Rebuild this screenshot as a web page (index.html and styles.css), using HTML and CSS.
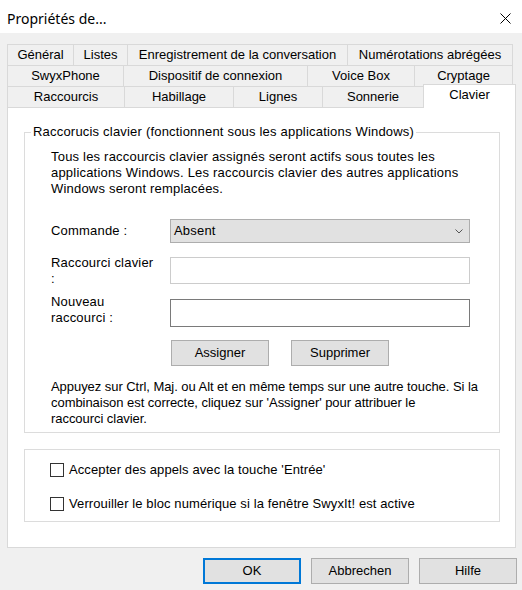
FILE: index.html
```html
<!DOCTYPE html>
<html lang="fr">
<head>
<meta charset="utf-8">
<title>Propriétés de...</title>
<link rel="stylesheet" href="styles.css">
</head>
<body>
<div class="titlebar">
  <span class="title">Propriétés de...</span>
  <svg class="close" width="11" height="11" viewBox="0 0 11 11" aria-label="Fermer"><path d="M0.5 0.5 L10.5 10.5 M10.5 0.5 L0.5 10.5" stroke="#000" stroke-width="1" fill="none"/></svg>
</div>
<div class="main">
  <div class="tabs" role="tablist">
    <div class="tabrow row1">
      <div class="tab" role="tab">Général</div>
      <div class="tab" role="tab">Listes</div>
      <div class="tab" role="tab">Enregistrement de la conversation</div>
      <div class="tab last" role="tab">Numérotations abrégées</div>
    </div>
    <div class="tabrow row2">
      <div class="tab" role="tab">SwyxPhone</div>
      <div class="tab" role="tab">Dispositif de connexion</div>
      <div class="tab" role="tab">Voice Box</div>
      <div class="tab last" role="tab">Cryptage</div>
    </div>
    <div class="tabrow row3">
      <div class="tab" role="tab">Raccourcis</div>
      <div class="tab" role="tab">Habillage</div>
      <div class="tab" role="tab">Lignes</div>
      <div class="tab" role="tab">Sonnerie</div>
      <div class="tab sel" role="tab" aria-selected="true">Clavier</div>
    </div>
  </div>
  <div class="panel" role="tabpanel">
    <fieldset class="group">
      <legend>Raccorucis clavier (fonctionnent sous les applications Windows)</legend>
      <div class="gb-body">
        <p class="text">Tous les raccourcis clavier assignés seront actifs sous toutes les<br>applications Windows. Les raccourcis clavier des autres applications<br>Windows seront remplacées.</p>
        <div class="row row-cmd">
          <label class="lbl">Commande :</label>
          <div class="select"><span>Absent</span><svg width="8" height="5" viewBox="0 0 8 5"><path d="M0.5 0.5 L4 4 L7.5 0.5" stroke="#555" stroke-width="1" fill="none"/></svg></div>
        </div>
        <div class="row row-rc">
          <label class="lbl">Raccourci clavier<br>:</label>
          <input class="field field-rc" type="text">
        </div>
        <div class="row row-nr">
          <label class="lbl">Nouveau<br>raccourci :</label>
          <input class="field field-nr" type="text">
        </div>
        <div class="btnrow">
          <button class="btn">Assigner</button>
          <button class="btn">Supprimer</button>
        </div>
        <p class="text text2">Appuyez sur Ctrl, Maj. ou Alt et en même temps sur une autre touche. Si la<br>combinaison est correcte, cliquez sur 'Assigner' pour attribuer le<br>raccourci clavier.</p>
      </div>
    </fieldset>
    <div class="group2">
      <div class="check"><span class="box"></span><span>Accepter des appels avec la touche 'Entrée'</span></div>
      <div class="check"><span class="box"></span><span>Verrouiller le bloc numérique si la fenêtre SwyxIt! est active</span></div>
    </div>
  </div>
  <div class="footer">
    <button class="btn default">OK</button>
    <button class="btn">Abbrechen</button>
    <button class="btn">Hilfe</button>
  </div>
</div>
</body>
</html>
```
FILE: styles.css
```css
* { box-sizing: border-box; }
html, body { margin: 0; padding: 0; }
body {
  width: 522px;
  height: 590px;
  overflow: hidden;
  background: #f0f0f0;
  font-family: "Liberation Sans", Arial, sans-serif;
  font-size: 13px;
  line-height: 16px;
  color: #000;
}
.titlebar {
  height: 33px;
  background: #fff;
  display: flex;
  align-items: flex-start;
  justify-content: space-between;
  padding: 0 11px 0 7px;
}
.title {
  font-family: "Noto Sans", sans-serif;
  font-size: 14px;
  line-height: 20px;
  margin-top: 9px;
}
.close { display: block; margin-top: 13px; }
.main { padding: 11px 0 0 7px; }
.tabs { width: 509px; }
.tabrow { display: grid; grid-template-rows: 21px; }
.row1 { grid-template-columns: 66px 54px 220px 166px; }
.row2 { grid-template-columns: 116px 184px 107px 99px; }
.row3 { grid-template-columns: 117px 109px 89px 101px 93px; }
.tab {
  border-top: 1px solid #d9d9d9;
  border-left: 1px solid #d9d9d9;
  background: #f0f0f0;
  text-align: center;
  padding-top: 2px;
  white-space: nowrap;
}
.tab.last { border-right: 1px solid #d9d9d9; }
.tab.sel {
  position: relative;
  z-index: 1;
  background: #fff;
  border-right: 1px solid #d9d9d9;
  align-self: start;
  height: 24px;
  margin-top: -2px;
}
.panel {
  width: 509px;
  height: 441px;
  border: 1px solid #d9d9d9;
  background: #fff;
  padding-left: 16px;
  letter-spacing: 0.2px;
}
.group {
  margin: 16px 0 0 0;
  width: 476px;
  min-width: 0;
  border: 1px solid #dcdcdc;
  padding: 9px 0 5px 0;
}
.group legend {
  padding: 0 2px;
  margin-left: 6px;
}
.gb-body { padding-left: 26px; }
.text { margin: 0; white-space: nowrap; }
.row { display: flex; align-items: flex-start; }
.lbl { width: 119px; flex: none; }
.row-cmd { margin-top: 22px; align-items: center; height: 24px; }
.select {
  width: 300px;
  height: 24px;
  background: #e1e1e1;
  border: 1px solid #adadad;
  display: flex;
  align-items: center;
  justify-content: space-between;
  padding: 0 6px 0 3px;
}
.select svg { display: block; }
.row-rc { margin-top: 12px; }
.row-nr { margin-top: 7px; }
.field {
  width: 300px;
  margin: 0;
  padding: 0 3px;
  background: #fff;
  font: inherit;
  outline: none;
}
.field-rc { height: 27px; margin-top: 2px; border: 1px solid #cccccc; }
.field-nr { height: 28px; margin-top: 5px; border: 1px solid #7a7a7a; }
.btnrow {
  display: flex;
  gap: 22px;
  margin-top: 13px;
  padding-left: 120px;
}
.btn {
  width: 98px;
  height: 26px;
  margin: 0;
  padding: 0;
  background: #e1e1e1;
  border: 1px solid #adadad;
  font: inherit;
  color: #000;
  text-align: center;
}
.btn.default { border: 2px solid #0078d7; }
.text2 { margin-top: 13px; letter-spacing: -0.05px; }
.group2 {
  margin-top: 16px;
  width: 476px;
  border: 1px solid #dcdcdc;
  padding: 13px 0 10px 25px;
}
.check { display: flex; align-items: center; height: 14px; white-space: nowrap; letter-spacing: 0.1px; }
.check + .check { margin-top: 20px; }
.box {
  width: 14px;
  height: 14px;
  flex: none;
  border: 1px solid #333;
  background: #fff;
  margin-right: 5px;
}
.footer {
  display: flex;
  justify-content: flex-end;
  gap: 10px;
  padding: 10px 5px 0 0;
}
```
